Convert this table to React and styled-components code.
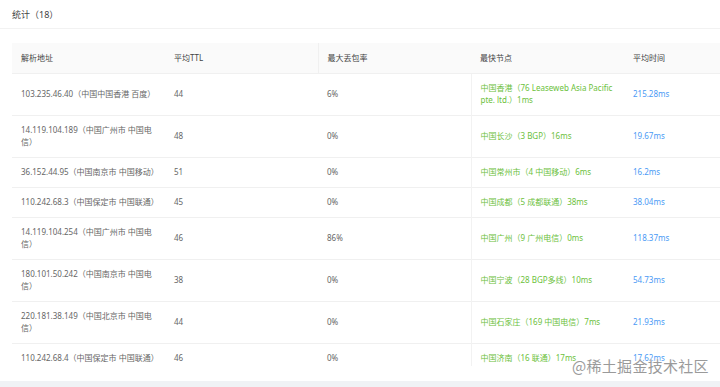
import styled, { createGlobalStyle } from "styled-components";

const rows = [
  { addr: "103.235.46.40（中国中国香港 百度）", ttl: "44", loss: "6%", node: "中国香港（76 Leaseweb Asia Pacific pte. ltd.）1ms", time: "215.28ms" },
  { addr: "14.119.104.189（中国广州市 中国电信）", ttl: "48", loss: "0%", node: "中国长沙（3 BGP）16ms", time: "19.67ms" },
  { addr: "36.152.44.95（中国南京市 中国移动）", ttl: "51", loss: "0%", node: "中国常州市（4 中国移动）6ms", time: "16.2ms" },
  { addr: "110.242.68.3（中国保定市 中国联通）", ttl: "45", loss: "0%", node: "中国成都（5 成都联通）38ms", time: "38.04ms" },
  { addr: "14.119.104.254（中国广州市 中国电信）", ttl: "46", loss: "86%", node: "中国广州（9 广州电信）0ms", time: "118.37ms" },
  { addr: "180.101.50.242（中国南京市 中国电信）", ttl: "38", loss: "0%", node: "中国宁波（28 BGP多线）10ms", time: "54.73ms" },
  { addr: "220.181.38.149（中国北京市 中国电信）", ttl: "44", loss: "0%", node: "中国石家庄（169 中国电信）7ms", time: "21.93ms" },
  { addr: "110.242.68.4（中国保定市 中国联通）", ttl: "46", loss: "0%", node: "中国济南（16 联通）17ms", time: "17.62ms" },
];

const GlobalStyle = createGlobalStyle`
  html, body {
    margin: 0;
    padding: 0;
    background: #ffffff;
    overflow: hidden;
  }
  body {
    font-family: "Noto Sans", "Noto Sans CJK SC", sans-serif;
  }
`;

const Page = styled.div`
  position: relative;
  width: 720px;
  height: 387px;
  display: flex;
  flex-direction: column;
  background: #fff;
  overflow: hidden;
`;

const TitleBar = styled.div`
  height: 29px;
  box-sizing: border-box;
  padding: 0 12px;
  display: flex;
  align-items: center;
  border-bottom: 1px solid #f2f2f2;
  font-size: 9px;
  color: #444;
`;

const Body = styled.div`
  flex: 1;
  padding: 14px 0 0 12px;
`;

const Scroll = styled.div`
  height: 323px;
  overflow: hidden;
`;

const Table = styled.table`
  width: 765px;
  border-collapse: collapse;
  table-layout: fixed;
  font-size: 8px;
  line-height: 12px;
`;

const Th = styled.th`
  height: 30px;
  box-sizing: border-box;
  padding: 0 9px;
  background: #fafafa;
  color: #444;
  font-weight: 400;
  text-align: left;
  border-left: ${({ $divider }) => ($divider ? "1px solid #f0f0f0" : "none")};
`;

const Td = styled.td`
  padding: 8.5px 9px;
  vertical-align: middle;
  color: ${({ $tone }) =>
    $tone === "green" ? "#6cbf3c" : $tone === "blue" ? "#4a9af5" : "#666"};
  border-top: 1px solid #f0f0f0;
  border-left: ${({ $divider }) => ($divider ? "1px solid #f2f2f2" : "none")};
  word-break: break-word;
`;

const Footer = styled.div`
  height: 6px;
  background: #f0f2f5;
`;

const Watermark = styled.div`
  position: absolute;
  left: 572px;
  top: 355px;
  font-size: 15px;
  letter-spacing: 0.3px;
  color: #9a9a9a;
  text-shadow: 0 0 2px #fff, 0 0 2px #fff, 0 0 3px #fff;
  font-family: "Noto Sans CJK SC", sans-serif;
`;

export default function App() {
  return (
    <Page>
      <GlobalStyle />
      <TitleBar>统计（18）</TitleBar>
      <Body>
        <Scroll>
          <Table>
            <thead>
              <tr>
                <Th>解析地址</Th>
                <Th>平均TTL</Th>
                <Th $divider>最大丢包率</Th>
                <Th>最快节点</Th>
                <Th>平均时间</Th>
              </tr>
            </thead>
            <tbody>
              {rows.map((r) => (
                <tr key={r.addr}>
                  <Td>{r.addr}</Td>
                  <Td>{r.ttl}</Td>
                  <Td>{r.loss}</Td>
                  <Td $tone="green" $divider>{r.node}</Td>
                  <Td $tone="blue">{r.time}</Td>
                </tr>
              ))}
            </tbody>
          </Table>
        </Scroll>
      </Body>
      <Footer />
      <Watermark>@稀土掘金技术社区</Watermark>
    </Page>
  );
}
